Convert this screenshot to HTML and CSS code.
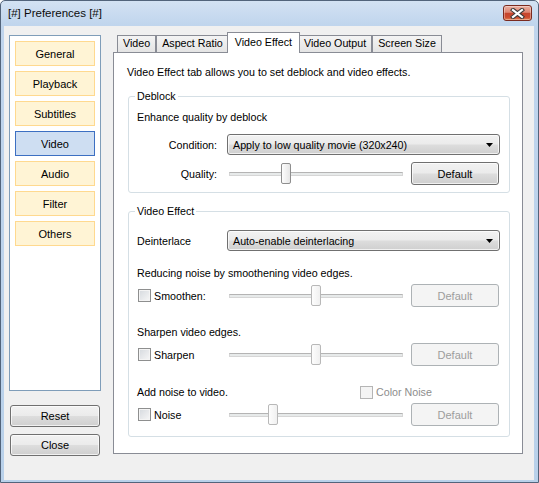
FILE: index.html
```html
<!DOCTYPE html>
<html lang="en">
<head>
    <meta charset="UTF-8">
    <title>[#] Preferences [#]</title>
    <link rel="stylesheet" href="styles.css">
</head>
<body>

    <div class="window">
        <div class="titlebar">
            <span class="title">[#] Preferences [#]</span>
            <div class="close-btn">
                <svg width="15" height="11" viewBox="0 0 15 11">
                    <path d="M3 2 L12 9 M12 2 L3 9" stroke="#3a3a3a" stroke-width="4.2" stroke-linecap="square"/>
                    <path d="M3 2 L12 9 M12 2 L3 9" stroke="#ffffff" stroke-width="2.2" stroke-linecap="square"/>
                </svg>
            </div>
        </div>

        <div class="client">
            <div class="sidebar">
                <div class="category-list">
                    <div class="category">General</div>
                    <div class="category">Playback</div>
                    <div class="category">Subtitles</div>
                    <div class="category selected">Video</div>
                    <div class="category">Audio</div>
                    <div class="category">Filter</div>
                    <div class="category">Others</div>
                </div>
                <button class="btn side-btn">Reset</button>
                <button class="btn side-btn close">Close</button>
            </div>

            <div class="tabs">
                <div class="tab-strip">
                    <div class="tab">Video</div>
                    <div class="tab">Aspect Ratio</div>
                    <div class="tab active">Video Effect</div>
                    <div class="tab">Video Output</div>
                    <div class="tab">Screen Size</div>
                </div>

                <div class="tab-panel">
                    <p class="intro">Video Effect tab allows you to set deblock and video effects.</p>

                    <fieldset class="group deblock">
                        <legend>Deblock</legend>
                        <p class="note first">Enhance quality by deblock</p>
                        <div class="row combo-row">
                            <span class="row-label right">Condition:</span>
                            <div class="combo">
                                <span>Apply to low quality movie (320x240)</span>
                                <svg width="7" height="4" viewBox="0 0 7 4"><polygon points="0,0 7,0 3.5,4" fill="#000"/></svg>
                            </div>
                        </div>
                        <div class="row control-row">
                            <span class="row-label right">Quality:</span>
                            <div class="controls">
                                <div class="slider">
                                    <div class="track"></div>
                                    <div class="thumb" style="--pos: 0.32"></div>
                                </div>
                                <button class="btn default-btn">Default</button>
                            </div>
                        </div>
                    </fieldset>

                    <fieldset class="group effect">
                        <legend>Video Effect</legend>
                        <div class="row combo-row first">
                            <span class="row-label">Deinterlace</span>
                            <div class="combo">
                                <span>Auto-enable deinterlacing</span>
                                <svg width="7" height="4" viewBox="0 0 7 4"><polygon points="0,0 7,0 3.5,4" fill="#000"/></svg>
                            </div>
                        </div>

                        <p class="note">Reducing noise by smoothening video edges.</p>
                        <div class="row control-row">
                            <label class="check-label"><span class="check"></span>Smoothen:</label>
                            <div class="controls">
                                <div class="slider disabled">
                                    <div class="track"></div>
                                    <div class="thumb" style="--pos: 0.5"></div>
                                </div>
                                <button class="btn default-btn" disabled>Default</button>
                            </div>
                        </div>

                        <p class="note">Sharpen video edges.</p>
                        <div class="row control-row">
                            <label class="check-label"><span class="check"></span>Sharpen</label>
                            <div class="controls">
                                <div class="slider disabled">
                                    <div class="track"></div>
                                    <div class="thumb" style="--pos: 0.5"></div>
                                </div>
                                <button class="btn default-btn" disabled>Default</button>
                            </div>
                        </div>

                        <div class="note noise-head">
                            <span class="noise-text">Add noise to video.</span>
                            <label class="check-label disabled"><span class="check"></span>Color Noise</label>
                        </div>
                        <div class="row control-row">
                            <label class="check-label"><span class="check"></span>Noise</label>
                            <div class="controls">
                                <div class="slider disabled">
                                    <div class="track"></div>
                                    <div class="thumb" style="--pos: 0.24"></div>
                                </div>
                                <button class="btn default-btn" disabled>Default</button>
                            </div>
                        </div>
                    </fieldset>
                </div>
            </div>
        </div>
    </div>

</body>
</html>
```

FILE: styles.css
```css
* {
    box-sizing: border-box;
}

body {
    margin: 0;
    font-family: "Liberation Sans", Arial, sans-serif;
    font-size: 10.7px;
    color: #000;
    background: #fff;
}

.window {
    width: 539px;
    height: 483px;
    display: flex;
    flex-direction: column;
    padding: 0 4px 2px 3px;
    border: 1px solid #52647b;
    border-radius: 5px 5px 0 0;
    background: linear-gradient(#d3e2f3, #c0d5ed 24px, #b9d1ea);
}

/* title bar */
.titlebar {
    height: 25px;
    display: flex;
    align-items: flex-start;
    padding-left: 4px;
}

.title {
    font-size: 11.5px;
    line-height: 25px;
    color: #0c0c0c;
}

.close-btn {
    margin: 4px 2px 0 auto;
    width: 29px;
    height: 16px;
    display: flex;
    align-items: center;
    justify-content: center;
    border: 1px solid #7a2a1f;
    border-radius: 3px;
    background: linear-gradient(#eab0a2, #dd8673 45%, #c6452d 52%, #cc4b30 80%, #e3804f);
    box-shadow: inset 0 0 0 1px rgba(255, 255, 255, 0.35);
}

/* client area */
.client {
    flex: 1;
    display: flex;
    background: #f0f0f0;
}

.sidebar {
    display: flex;
    flex-direction: column;
    padding: 9px 0 0 5px;
}

.category-list {
    width: 92px;
    height: 356px;
    display: flex;
    flex-direction: column;
    gap: 5px;
    padding: 5px 5px 0;
    border: 1px solid #7f9db9;
    background: #fff;
}

.category {
    height: 25px;
    display: flex;
    align-items: center;
    justify-content: center;
    font-size: 11px;
    border: 1px solid #ffd98f;
    background: #fff4d5;
}

.category.selected {
    border-color: #3c6fc2;
    background: #cedef2;
}

.btn {
    font-family: inherit;
    font-size: 11px;
    color: #000;
    padding: 0;
    border: 1px solid #707070;
    border-radius: 3px;
    background: linear-gradient(#f2f2f2, #ebebeb 48%, #dddddd 52%, #cfcfcf);
    box-shadow: inset 0 0 0 1px rgba(255, 255, 255, 0.7);
}

.btn:disabled {
    color: #9d9d9d;
    border-color: #adb2b5;
    background: #f4f4f4;
    box-shadow: none;
}

.side-btn {
    width: 90px;
    height: 22px;
    margin: 14px 1px 0;
}

.side-btn.close {
    margin-top: 7px;
}

/* tabs */
.tabs {
    width: 410px;
    margin-left: 12px;
    padding-top: 6px;
    display: flex;
    flex-direction: column;
}

.tab-strip {
    height: 20px;
    display: flex;
    align-items: flex-end;
    padding-left: 4px;
}

.tab {
    height: 17px;
    line-height: 15px;
    padding: 0 5px;
    border: 1px solid #898c95;
    border-bottom: none;
    background: linear-gradient(#f4f4f4, #e4e4e4);
}

.tab.active {
    position: relative;
    z-index: 1;
    height: 21px;
    line-height: 18px;
    margin: 0 -2px -1px;
    padding: 0 7px;
    background: #fff;
}

.tab-panel {
    border: 1px solid #898c95;
    background: #fff;
    padding: 13px 12px 16px 14px;
}

.intro {
    margin: 0 0 0 -1px;
    line-height: 13px;
}

/* group boxes */
.group {
    margin: 11px 0 0;
    min-width: 0;
    padding: 0 9px 7px 8px;
    border: 1px solid #d5dfe5;
    border-radius: 3px;
}

.group.effect {
    margin-top: 12px;
    padding-bottom: 10px;
}

.group legend {
    padding: 0 2px;
    margin-left: -2px;
    line-height: 13px;
}

.note {
    margin: 19px 0 0;
    line-height: 13px;
}

.note.first {
    margin-top: 8px;
}

.effect .note:nth-of-type(1) {
    margin-top: 16px;
}

.noise-head {
    margin-top: 20px;
    display: flex;
    align-items: center;
}

.noise-text {
    width: 222px;
}

.row {
    display: grid;
    grid-template-columns: 80px 1fr;
    column-gap: 10px;
    align-items: center;
}

.combo-row {
    margin-top: 10px;
}

.combo-row.first {
    margin-top: 12px;
}

.control-row {
    margin-top: 4px;
}

.deblock .control-row {
    margin-top: 7px;
}

.row-label.right {
    text-align: right;
}

.combo {
    height: 21px;
    display: flex;
    align-items: center;
    justify-content: space-between;
    padding: 0 6px 0 5px;
    border: 1px solid #707070;
    border-radius: 3px;
    background: linear-gradient(#f2f2f2, #ebebeb 48%, #dddddd 52%, #cfcfcf);
    box-shadow: inset 0 0 0 1px rgba(255, 255, 255, 0.7);
}

.controls {
    display: flex;
    align-items: center;
}

.slider {
    position: relative;
    flex: 1;
    height: 21px;
    margin: 0 8px 0 2px;
    display: flex;
    align-items: center;
}

.track {
    width: 100%;
    height: 4px;
    border: 1px solid #d6d6d6;
    border-top-color: #b4b4b4;
    background: #e7eaea;
}

.thumb {
    position: absolute;
    top: 0;
    left: calc(var(--pos) * (100% - 10px));
    width: 10px;
    height: 21px;
    border: 1px solid #8e8e8e;
    border-radius: 2px;
    background: linear-gradient(90deg, #fdfdfd, #e6e6e6);
}

.slider.disabled .thumb {
    border-color: #b8b8b8;
    background: linear-gradient(90deg, #fdfdfd, #f0f0f0);
}

.default-btn {
    width: 88px;
    height: 23px;
    margin-right: 1px;
}

/* checkboxes */
.check-label {
    display: flex;
    align-items: center;
    gap: 3px;
}

.check {
    width: 13px;
    height: 13px;
    margin-left: 1px;
    border: 1px solid #8e8f8f;
    background: linear-gradient(135deg, #d5d9de, #f7f7f7);
    box-shadow: inset 0 0 0 1px #f4f4f4;
}

.check-label.disabled {
    color: #8d8d8d;
}

.check-label.disabled .check {
    border-color: #b5b5b5;
    background: #f4f4f4;
}
```
